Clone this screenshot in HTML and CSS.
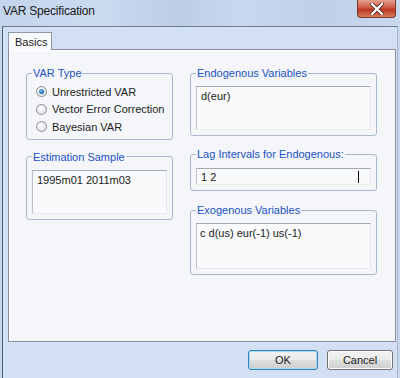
FILE: index.html
```html
<!DOCTYPE html>
<html lang="en">
<head>
    <meta charset="UTF-8">
    <title>VAR Specification</title>
    <link rel="stylesheet" href="styles.css">
</head>
<body>
    <div class="titlebar">
        <span class="title">VAR Specification</span>
        <div class="close-btn">
            <svg width="14" height="12" viewBox="0 0 14 12">
                <path d="M2 1 L12 11 M12 1 L2 11" stroke="#5a2a22" stroke-width="4" stroke-linecap="square"/>
                <path d="M2 1 L12 11 M12 1 L2 11" stroke="#ffffff" stroke-width="2.2" stroke-linecap="square"/>
            </svg>
        </div>
    </div>

    <div class="client">
        <div class="tabs">
            <div class="tab">Basics</div>
        </div>

        <div class="panel">
            <div class="column">
                <fieldset class="group var-type">
                    <legend>VAR Type</legend>
                    <div class="radio-row"><span class="radio checked"></span>Unrestricted VAR</div>
                    <div class="radio-row"><span class="radio"></span>Vector Error Correction</div>
                    <div class="radio-row"><span class="radio"></span>Bayesian VAR</div>
                </fieldset>

                <fieldset class="group sample">
                    <legend>Estimation Sample</legend>
                    <div class="textbox tall">1995m01 2011m03</div>
                </fieldset>
            </div>

            <div class="column">
                <fieldset class="group endo">
                    <legend>Endogenous Variables</legend>
                    <div class="textbox tall">d(eur)</div>
                </fieldset>

                <fieldset class="group lag">
                    <legend>Lag Intervals for Endogenous:</legend>
                    <div class="textbox single">1 2<span class="caret"></span></div>
                </fieldset>

                <fieldset class="group exo">
                    <legend>Exogenous Variables</legend>
                    <div class="textbox exo-box">c d(us) eur(-1) us(-1)</div>
                </fieldset>
            </div>
        </div>

        <div class="buttons">
            <button class="btn default">OK</button>
            <button class="btn">Cancel</button>
        </div>
    </div>
</body>
</html>
```

FILE: styles.css
```css
body, html {
    margin: 0;
    padding: 0;
}

body {
    width: 400px;
    height: 378px;
    overflow: hidden;
    background-color: #c6d6ec;
    font-family: "Liberation Sans", Arial, sans-serif;
    font-size: 11px;
    color: #1c1c1c;
}

/* title bar */
.titlebar {
    height: 26px;
    display: flex;
    justify-content: space-between;
    align-items: flex-start;
    background: linear-gradient(90deg, #c3d4ec 0%, #cbdaef 25%, #bccde6 45%, #c8d8ee 60%, #bfd0e8 80%, #c9d9ee 100%);
}

.title {
    padding: 4px 0 0 3px;
    font-size: 12px;
    letter-spacing: -0.2px;
    color: #1a1a1a;
}

.close-btn {
    width: 37px;
    height: 17px;
    margin-right: 4px;
    display: flex;
    justify-content: center;
    align-items: center;
    border: 1px solid #7d3a30;
    border-top: none;
    border-radius: 0 0 4px 4px;
    background: linear-gradient(#e3a191 0%, #cf5a44 45%, #b83620 55%, #d97a5e 100%);
}

/* client area */
.client {
    margin-left: 2px;
    width: 396px;
    height: 352px;
    box-sizing: border-box;
    border-left: 1px solid #4f5e78;
    border-top: 1px solid #6f7d94;
    border-right: 1px solid #a9b6cc;
    background-color: #d3e0f3;
    padding: 5px 0 0 5px;
}

.tabs {
    display: flex;
}

.tab {
    position: relative;
    z-index: 1;
    height: 18px;
    width: 44px;
    box-sizing: border-box;
    margin-bottom: -1px;
    padding: 3px 0 0 6px;
    border: 1px solid #8e98aa;
    border-bottom: none;
    background-color: #f9fafc;
}

.panel {
    width: 388px;
    height: 293px;
    box-sizing: border-box;
    border: 1px solid #8b8a9e;
    background-color: #f4f6fa;
    box-shadow: inset 1px 1px 0 #ffffff;
    padding: 16px 0 0 17px;
    display: grid;
    grid-template-columns: 147px 187px;
    column-gap: 17px;
    align-items: start;
}

.column {
    display: flex;
    flex-direction: column;
}

/* group boxes */
.group {
    margin: 0;
    min-width: 0;
    border: 1px solid #aab8cd;
    border-radius: 3px;
    padding: 6px 5px 5px 5px;
}

.group legend {
    padding: 0 1px;
    line-height: 14px;
    color: #2152c2;
}

.var-type {
    padding: 3px 5px 3px 5px;
}

.sample {
    margin-top: 10px;
}

.lag {
    margin-top: 11px;
    padding-top: 7px;
}

.exo {
    margin-top: 12px;
}

.radio-row {
    height: 17.5px;
    display: flex;
    align-items: center;
    padding-left: 4px;
}

.radio {
    width: 11px;
    height: 11px;
    box-sizing: border-box;
    margin-right: 5px;
    border: 1px solid #8d8f92;
    border-radius: 50%;
    background: radial-gradient(circle at 40% 40%, #ffffff 0%, #e8e9eb 55%, #cfd1d4 100%);
    display: flex;
    justify-content: center;
    align-items: center;
}

.radio.checked::after {
    content: "";
    width: 5px;
    height: 5px;
    border-radius: 50%;
    background: radial-gradient(circle at 40% 35%, #7cc3f0 0%, #1f6cb3 60%, #124f8c 100%);
}

/* text boxes */
.textbox {
    box-sizing: border-box;
    border: 1px solid;
    border-color: #a5a9b0 #e3e6eb #e8ebf0 #bcc0c6;
    background-color: #f8fafb;
    padding: 2px 4px;
    line-height: 14px;
    display: flex;
    align-items: flex-start;
}

.tall {
    height: 44px;
}

.single {
    height: 17px;
    padding-top: 1px;
    justify-content: space-between;
}

.exo-box {
    height: 46px;
    padding-left: 3px;
}

.caret {
    width: 1px;
    height: 12px;
    margin: 1px 7px 0 0;
    background-color: #000000;
}

/* dialog buttons */
.buttons {
    display: flex;
    justify-content: flex-end;
    gap: 9px;
    margin-top: 8px;
    padding-right: 4px;
}

.btn {
    width: 66px;
    height: 20px;
    padding: 0;
    font-family: inherit;
    font-size: 11px;
    color: #1c1c1c;
    border: 1px solid #707070;
    border-radius: 3px;
    background: linear-gradient(#f2f2f2 0%, #ebebeb 48%, #dddddd 52%, #cfcfcf 100%);
    box-shadow: inset 0 0 0 1px #fbfbfb;
}

.btn.default {
    width: 70px;
    border-color: #3c7fb1;
    box-shadow: inset 0 0 0 1px #9fdcf6;
}
```
